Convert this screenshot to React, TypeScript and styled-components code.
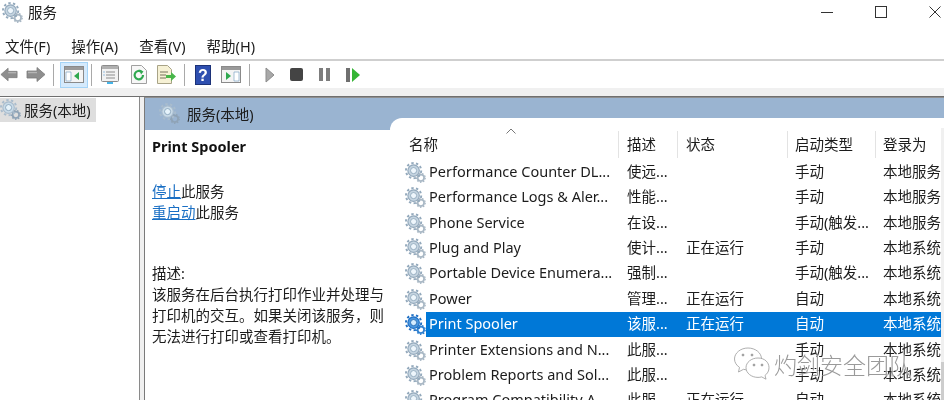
import React, { FC } from 'react'
import styled, { createGlobalStyle } from 'styled-components'

const GlobalStyle = createGlobalStyle`
  html, body {
    margin: 0;
    padding: 0;
    background: #fff;
  }
  body {
    font-family: "Noto Sans", "Noto Sans CJK SC", sans-serif;
    font-size: 14.5px;
    color: #1c1c1c;
  }
`

type Service = {
  name: string
  desc: string
  status?: string
  start: string
  logon: string
  selected?: boolean
}

const services: Service[] = [
  { name: 'Performance Counter DL...', desc: '使远...', start: '手动', logon: '本地服务' },
  { name: 'Performance Logs & Aler...', desc: '性能...', start: '手动', logon: '本地服务' },
  { name: 'Phone Service', desc: '在设...', start: '手动(触发...', logon: '本地服务' },
  { name: 'Plug and Play', desc: '使计...', status: '正在运行', start: '手动', logon: '本地系统' },
  { name: 'Portable Device Enumera...', desc: '强制...', start: '手动(触发...', logon: '本地系统' },
  { name: 'Power', desc: '管理...', status: '正在运行', start: '自动', logon: '本地系统' },
  { name: 'Print Spooler', desc: '该服...', status: '正在运行', start: '自动', logon: '本地系统', selected: true },
  { name: 'Printer Extensions and N...', desc: '此服...', start: '手动', logon: '本地系统' },
  { name: 'Problem Reports and Sol...', desc: '此服...', start: '手动', logon: '本地系统' },
  { name: 'Program Compatibility A...', desc: '此服...', status: '正在运行', start: '自动', logon: '本地系统' },
]

const menus = ['文件(F)', '操作(A)', '查看(V)', '帮助(H)']

type GearTone = 'normal' | 'active' | 'pale'

const gearColors: Record<GearTone, { body: string; fill: string; small: string; hole: string; ring: string }> = {
  normal: { body: '#93a9bc', fill: '#c6d5e1', small: '#a9b8c5', hole: '#eef6fc', ring: '#86a0b5' },
  active: { body: '#1f6fc4', fill: '#4a97e0', small: '#2f80d0', hole: '#d5ecff', ring: '#1a5fa8' },
  pale: { body: '#a9bccd', fill: '#c9dbe8', small: '#8fa3b6', hole: '#e6f3fb', ring: '#7c9ab3' },
}

// gear drawn from two dashed circles, the dashes are the teeth
const Gear: FC<{ size?: number; tone?: GearTone }> = ({ size = 21, tone = 'normal' }) => {
  const c = gearColors[tone]
  return (
    <svg width={size} height={size} viewBox="0 0 22 22">
      <circle cx="16.6" cy="16.6" r="3.4" fill="none" stroke={c.small} strokeWidth="1.8" />
      <circle cx="16.6" cy="16.6" r="4.6" fill="none" stroke={c.small} strokeWidth="1.4" strokeDasharray="1.6 1.6" />
      <circle cx="9" cy="9" r="8" fill="none" stroke={c.body} strokeWidth="2" strokeDasharray="2.5 2.5" />
      <circle cx="9" cy="9" r="6" fill={c.fill} stroke={c.body} strokeWidth="1.2" />
      <circle cx="9" cy="9" r="3.2" fill={c.hole} stroke={c.ring} strokeWidth="0.8" />
    </svg>
  )
}

const WindowGlyph: FC<{ arrow: 'left' | 'right' }> = ({ arrow }) => (
  <svg width="20" height="17" viewBox="0 0 20 17">
    <rect x="0.5" y="0.5" width="19" height="16" fill="#f4f4f4" stroke="#8a8a8a" />
    <rect x="1" y="1" width="18" height="3" fill="#9a9a9a" />
    {arrow === 'left' ? (
      <>
        <path d="M2 6h5v9H2z" fill="#fff" stroke="#7fa3c4" strokeWidth="0.7" />
        <path d="M15 6v8l-5-4z" fill="#2fa84f" />
      </>
    ) : (
      <>
        <path d="M13 6h5v9h-5z" fill="#fff" stroke="#7fa3c4" strokeWidth="0.7" />
        <path d="M5 6v8l5-4z" fill="#2fa84f" />
      </>
    )}
  </svg>
)

const Arrow: FC<{ flip?: boolean }> = ({ flip }) => (
  <svg width="20" height="17" viewBox="0 0 20 16" style={flip ? { transform: 'scaleX(-1)' } : undefined}>
    <path d="M1 8l8-7v3.500h10v7H9V15z" fill="#8e8e8e" stroke="#7a7a7a" strokeWidth="0.8" />
    <path d="M9 6h9" stroke="#b5b5b5" strokeWidth="1.4" />
  </svg>
)

const Toolbar: FC = () => (
  <ToolbarRow>
    <ToolSlot $w={18}><Arrow /></ToolSlot>
    <ToolSlot $w={35}><Arrow flip /></ToolSlot>
    <ToolSep />
    <ActiveTool><WindowGlyph arrow="left" /></ActiveTool>
    <ToolSep $ml={3} />
    <ToolSlot $w={36}>
      <svg width="18" height="19" viewBox="0 0 18 19">
        <rect x="0.5" y="0.5" width="17" height="16" rx="1" fill="#f2f2f2" stroke="#8c8c8c" />
        <rect x="1" y="1" width="16" height="3" fill="#b0b0b0" />
        <path d="M5 7h9M5 10h9M5 13h9" stroke="#8c8c8c" />
        <path d="M2.500 7h1M2.500 10h1" stroke="#3d8fd1" />
        <rect x="6" y="17" width="6" height="2" fill="#45b4e8" />
      </svg>
    </ToolSlot>
    <ToolSlot $w={22}>
      <svg width="16" height="19" viewBox="0 0 16 19">
        <path d="M0.500 0.500h10l5 5v13h-15z" fill="#f7f7f7" stroke="#a0a0a0" />
        <path d="M12 10a4.200 4.200 0 1 1-1.400-3" fill="none" stroke="#2fa84f" strokeWidth="2.2" />
        <path d="M8.500 4.500l4 2-2.500 3z" fill="#2fa84f" />
      </svg>
    </ToolSlot>
    <ToolSlot $w={32}>
      <svg width="19" height="19" viewBox="0 0 19 19">
        <path d="M0.500 0.500h10l4 4v14h-14z" fill="#f6f1d5" stroke="#a8a387" />
        <path d="M3 7h8M3 10h6M3 13h6" stroke="#77735c" />
        <path d="M9 10h5V7l5 4.500-5 4.500v-3H9z" fill="#49b64a" />
      </svg>
    </ToolSlot>
    <ToolSep $ml={2} />
    <ToolSlot $w={36}>
      <svg width="16" height="20" viewBox="0 0 16 20">
        <rect width="16" height="20" fill="#2e4fb0" />
        <rect x="0.5" y="0.5" width="15" height="19" fill="none" stroke="#1c3278" />
        <text x="8" y="16" textAnchor="middle" fontSize="16" fontWeight="700" fill="#fff" fontFamily="Liberation Sans">?</text>
      </svg>
    </ToolSlot>
    <ToolSlot $w={20}><WindowGlyph arrow="right" /></ToolSlot>
    <ToolSep $ml={8} />
    <ToolSlot $w={40}>
      <svg width="10" height="16" viewBox="0 0 10 16">
        <path d="M1 1l8 7-8 7z" fill="#a8a8a8" stroke="#8c8c8c" />
      </svg>
    </ToolSlot>
    <ToolSlot $w={13}>
      <svg width="13" height="13" viewBox="0 0 13 13">
        <rect width="13" height="13" rx="2" fill="#444" />
      </svg>
    </ToolSlot>
    <ToolSlot $w={11} $ml={16}>
      <svg width="11" height="13" viewBox="0 0 11 13">
        <rect width="4" height="13" fill="#7d7d7d" />
        <rect x="7" width="4" height="13" fill="#7d7d7d" />
      </svg>
    </ToolSlot>
    <ToolSlot $w={14} $ml={16}>
      <svg width="14" height="14" viewBox="0 0 14 14">
        <rect width="4" height="14" fill="#6f6f6f" />
        <path d="M6 0l8 7-8 7z" fill="#35b535" />
      </svg>
    </ToolSlot>
  </ToolbarRow>
)

const ServiceRow: FC<{ service: Service }> = ({ service }) => (
  <Row>
    <RowIcon><Gear tone={service.selected ? 'active' : 'normal'} /></RowIcon>
    <Cells $selected={service.selected}>
      <Cell $pad={3}>{service.name}</Cell>
      <Cell $pad={9}>{service.desc}</Cell>
      <Cell $pad={9}>{service.status}</Cell>
      <Cell $pad={8}>{service.start}</Cell>
      <Cell $pad={8}>{service.logon}</Cell>
    </Cells>
  </Row>
)

const App: FC = () => {
  return (
    <Page>
      <GlobalStyle />
      <TitleBar>
        <TitleLeft>
          <Gear />
          <span>服务</span>
        </TitleLeft>
        <WindowButtons>
          <svg width="12" height="12" viewBox="0 0 12 12"><path d="M0 6.500h12" stroke="#333" /></svg>
          <svg width="12" height="12" viewBox="0 0 12 12"><rect x="0.5" y="0.5" width="11" height="11" fill="none" stroke="#333" /></svg>
          <svg width="12" height="12" viewBox="0 0 12 12"><path d="M0.500 0.500l11 11M11.500 0.500l-11 11" stroke="#333" /></svg>
        </WindowButtons>
      </TitleBar>
      <MenuBar>
        {menus.map((m) => <MenuItem key={m}>{m}</MenuItem>)}
      </MenuBar>
      <Toolbar />
      <Strip />
      <Workspace>
        <TreePane>
          <TreeItem>
            <Gear tone="pale" />
            <span>服务(本地)</span>
          </TreeItem>
        </TreePane>
        <MainPane>
          <DetailColumn>
            <PaneHeader>
              <Gear tone="pale" />
              <span>服务(本地)</span>
            </PaneHeader>
            <Detail>
              <DetailTitle>Print Spooler</DetailTitle>
              <ActionLine><a>停止</a>此服务</ActionLine>
              <ActionLine><a>重启动</a>此服务</ActionLine>
              <DescText>
                描述:<br />
                该服务在后台执行打印作业并处理与<br />
                打印机的交互。如果关闭该服务，则<br />
                无法进行打印或查看打印机。
              </DescText>
            </Detail>
          </DetailColumn>
          <ListColumn>
            <Table>
              <HeaderRow>
                <SortMark>
                  <svg width="10" height="6" viewBox="0 0 10 6"><path d="M0.500 5.500L5 1l4.500 4.500" fill="none" stroke="#777" /></svg>
                </SortMark>
                <HeadCell $w={228} $pad={19} $first>名称</HeadCell>
                <HeadCell $w={59} $pad={8}>描述</HeadCell>
                <HeadCell $w={110} $pad={8}>状态</HeadCell>
                <HeadCell $w={88} $pad={7}>启动类型</HeadCell>
                <HeadCell $w={66} $pad={7}>登录为</HeadCell>
              </HeaderRow>
              {services.map((s) => <ServiceRow key={s.name} service={s} />)}
            </Table>
            <ScrollTrack><ScrollThumb /></ScrollTrack>
          </ListColumn>
        </MainPane>
      </Workspace>
      <Watermark>
        <svg width="38" height="34" viewBox="0 0 38 34" fill="#fff" stroke="#9a9a9a" strokeWidth="0.8">
          <path d="M15 2C7.500 2 1.500 7 1.500 13c0 3.400 2 6.400 5 8.400L5.500 26l5-2.700c1.500.4 3 .6 4.500.6 7.500 0 13.500-5 13.500-11S22.500 2 15 2z" />
          <path d="M25 12c-6.600 0-12 4.300-12 9.700s5.400 9.700 12 9.700c1.300 0 2.500-.2 3.700-.5l4.300 2.300-1-3.800c2.500-1.800 4-4.500 4-7.700C36 16.300 31.600 12 25 12z" />
          <circle cx="10" cy="9" r="1" fill="#9a9a9a" />
          <circle cx="19" cy="9" r="1" fill="#9a9a9a" />
          <circle cx="21" cy="19" r="1" fill="#9a9a9a" />
          <circle cx="29" cy="19" r="1" fill="#9a9a9a" />
        </svg>
        <WatermarkText>灼剑安全团队</WatermarkText>
      </Watermark>
    </Page>
  )
}

const Page = styled.div`
  position: relative;
  width: 944px;
  height: 400px;
  overflow: hidden;
  background: #fff;
  display: flex;
  flex-direction: column;
  filter: blur(0.35px);
`

const TitleBar = styled.div`
  height: 30px;
  flex: none;
  display: flex;
  align-items: flex-start;
  justify-content: space-between;
  padding-top: 2px;
  box-sizing: border-box;
`

const TitleLeft = styled.div`
  display: flex;
  align-items: center;
  gap: 5px;
  padding-left: 2px;
  font-size: 14.5px;
  line-height: 21px;
`

const WindowButtons = styled.div`
  display: flex;
  gap: 42px;
  padding: 4px 3px 0 0;
`

const MenuBar = styled.div`
  height: 29px;
  flex: none;
  display: flex;
  align-items: center;
  gap: 21px;
  padding: 1px 0 0 5px;
  box-sizing: border-box;
`

const MenuItem = styled.span`
  font-size: 14.5px;
`

const ToolbarRow = styled.div`
  height: 27px;
  flex: none;
  border-top: 2px solid #cfcfcf;
  display: flex;
  align-items: center;
`

const ToolSlot = styled.div<{ $w: number; $ml?: number }>`
  width: ${({ $w }) => $w}px;
  margin-left: ${({ $ml }) => $ml ?? 0}px;
  flex: none;
  display: flex;
  justify-content: center;
  align-items: center;
`

const ToolSep = styled.div<{ $ml?: number }>`
  width: 1px;
  height: 22px;
  flex: none;
  margin-left: ${({ $ml }) => $ml ?? 0}px;
  background: #a9a9a9;
`

const ActiveTool = styled.div`
  width: 28px;
  height: 26px;
  flex: none;
  margin-left: 6px;
  box-sizing: border-box;
  display: flex;
  align-items: center;
  justify-content: center;
  background: #d5eafc;
  border: 1px solid #a5d4f7;
`

const Strip = styled.div`
  height: 8px;
  flex: none;
  background: #f0f0f0;
  border-bottom: 1px solid #6f6f6f;
`

const Workspace = styled.div`
  flex: 1;
  min-height: 0;
  display: flex;
  background: #f0f0f0;
`

const TreePane = styled.div`
  width: 139px;
  flex: none;
  background: #fff;
  border-right: 1px solid #8a8a8a;
  padding-top: 1px;
`

const TreeItem = styled.div`
  width: 96px;
  height: 24px;
  display: flex;
  align-items: center;
  gap: 3px;
  padding-bottom: 2px;
  box-sizing: border-box;
  background: #dedede;
  font-size: 14.5px;
  white-space: nowrap;
`

const MainPane = styled.div`
  flex: 1;
  min-width: 0;
  margin-left: 4px;
  border-left: 1px solid #7a7a7a;
  border-top: 1px solid #8e8e8e;
  background: #9ab4d1;
  display: flex;
`

const DetailColumn = styled.div`
  width: 245px;
  flex: none;
  display: flex;
  flex-direction: column;
`

const PaneHeader = styled.div`
  height: 32px;
  flex: none;
  display: flex;
  align-items: center;
  gap: 7px;
  padding: 0 0 1px 14px;
  box-sizing: border-box;
  font-size: 14.5px;
  white-space: nowrap;
`

const Detail = styled.div`
  flex: 1;
  background: #fff;
  padding: 6px 0 0 7px;
`

const DetailTitle = styled.div`
  font-weight: 700;
  font-size: 14.5px;
  line-height: 21px;
  margin-bottom: 24px;
  color: #111;
`

const ActionLine = styled.div`
  line-height: 20.5px;
  font-size: 14.5px;
  white-space: nowrap;

  a {
    color: #1a6fc4;
    text-decoration: underline;
  }
`

const DescText = styled.div`
  margin-top: 41px;
  line-height: 21px;
  font-size: 14.5px;
  white-space: nowrap;
`

const ListColumn = styled.div`
  flex: 1;
  min-width: 0;
  margin-top: 20px;
  background: #fff;
  border-top-left-radius: 12px;
  display: flex;
`

const Table = styled.div`
  width: 551px;
  flex: none;
`

const HeaderRow = styled.div`
  position: relative;
  height: 41.6px;
  padding-top: 13px;
  box-sizing: border-box;
  display: flex;
`

const SortMark = styled.div`
  position: absolute;
  left: 116px;
  top: 10px;
  line-height: 0;
`

const HeadCell = styled.div<{ $w: number; $pad: number; $first?: boolean }>`
  width: ${({ $w }) => $w}px;
  flex: none;
  box-sizing: border-box;
  height: 27px;
  line-height: 26px;
  padding-left: ${({ $pad }) => $pad}px;
  border-left: ${({ $first }) => ($first ? 'none' : '1px solid #e3e3e3')};
  font-size: 14.5px;
  white-space: nowrap;
  overflow: hidden;
`

const Row = styled.div`
  height: 25.4px;
  display: flex;
`

const RowIcon = styled.div`
  width: 36px;
  flex: none;
  display: flex;
  align-items: center;
  justify-content: flex-end;
  box-sizing: border-box;
`

const Cells = styled.div<{ $selected?: boolean }>`
  display: grid;
  grid-template-columns: 192px 59px 110px 88px 66px;
  width: 515px;
  align-items: center;
  background: ${({ $selected }) => ($selected ? '#0078d7' : 'transparent')};
  color: ${({ $selected }) => ($selected ? '#fff' : '#1c1c1c')};
`

const Cell = styled.div<{ $pad: number }>`
  padding: 0 0 2px ${({ $pad }) => $pad}px;
  font-size: 14.5px;
  line-height: 23px;
  white-space: nowrap;
  overflow: hidden;
`

const ScrollTrack = styled.div`
  width: 3px;
  flex: none;
  margin-top: 10px;
  background: #f0f0f0;
  display: flex;
  flex-direction: column;
  justify-content: flex-end;
`

const ScrollThumb = styled.div`
  height: 38px;
  background: #cdcdcd;
`

const Watermark = styled.div`
  position: absolute;
  left: 733px;
  top: 345px;
  display: flex;
  align-items: center;
  gap: 3px;
`

const WatermarkText = styled.span`
  font-size: 23px;
  font-weight: 300;
  color: rgba(120, 120, 120, 0.75);
  text-shadow: 0 0 1px #fff, 1px 1px 0 rgba(255, 255, 255, 0.7);
  white-space: nowrap;
  margin-top: 2px;
`

export default App
